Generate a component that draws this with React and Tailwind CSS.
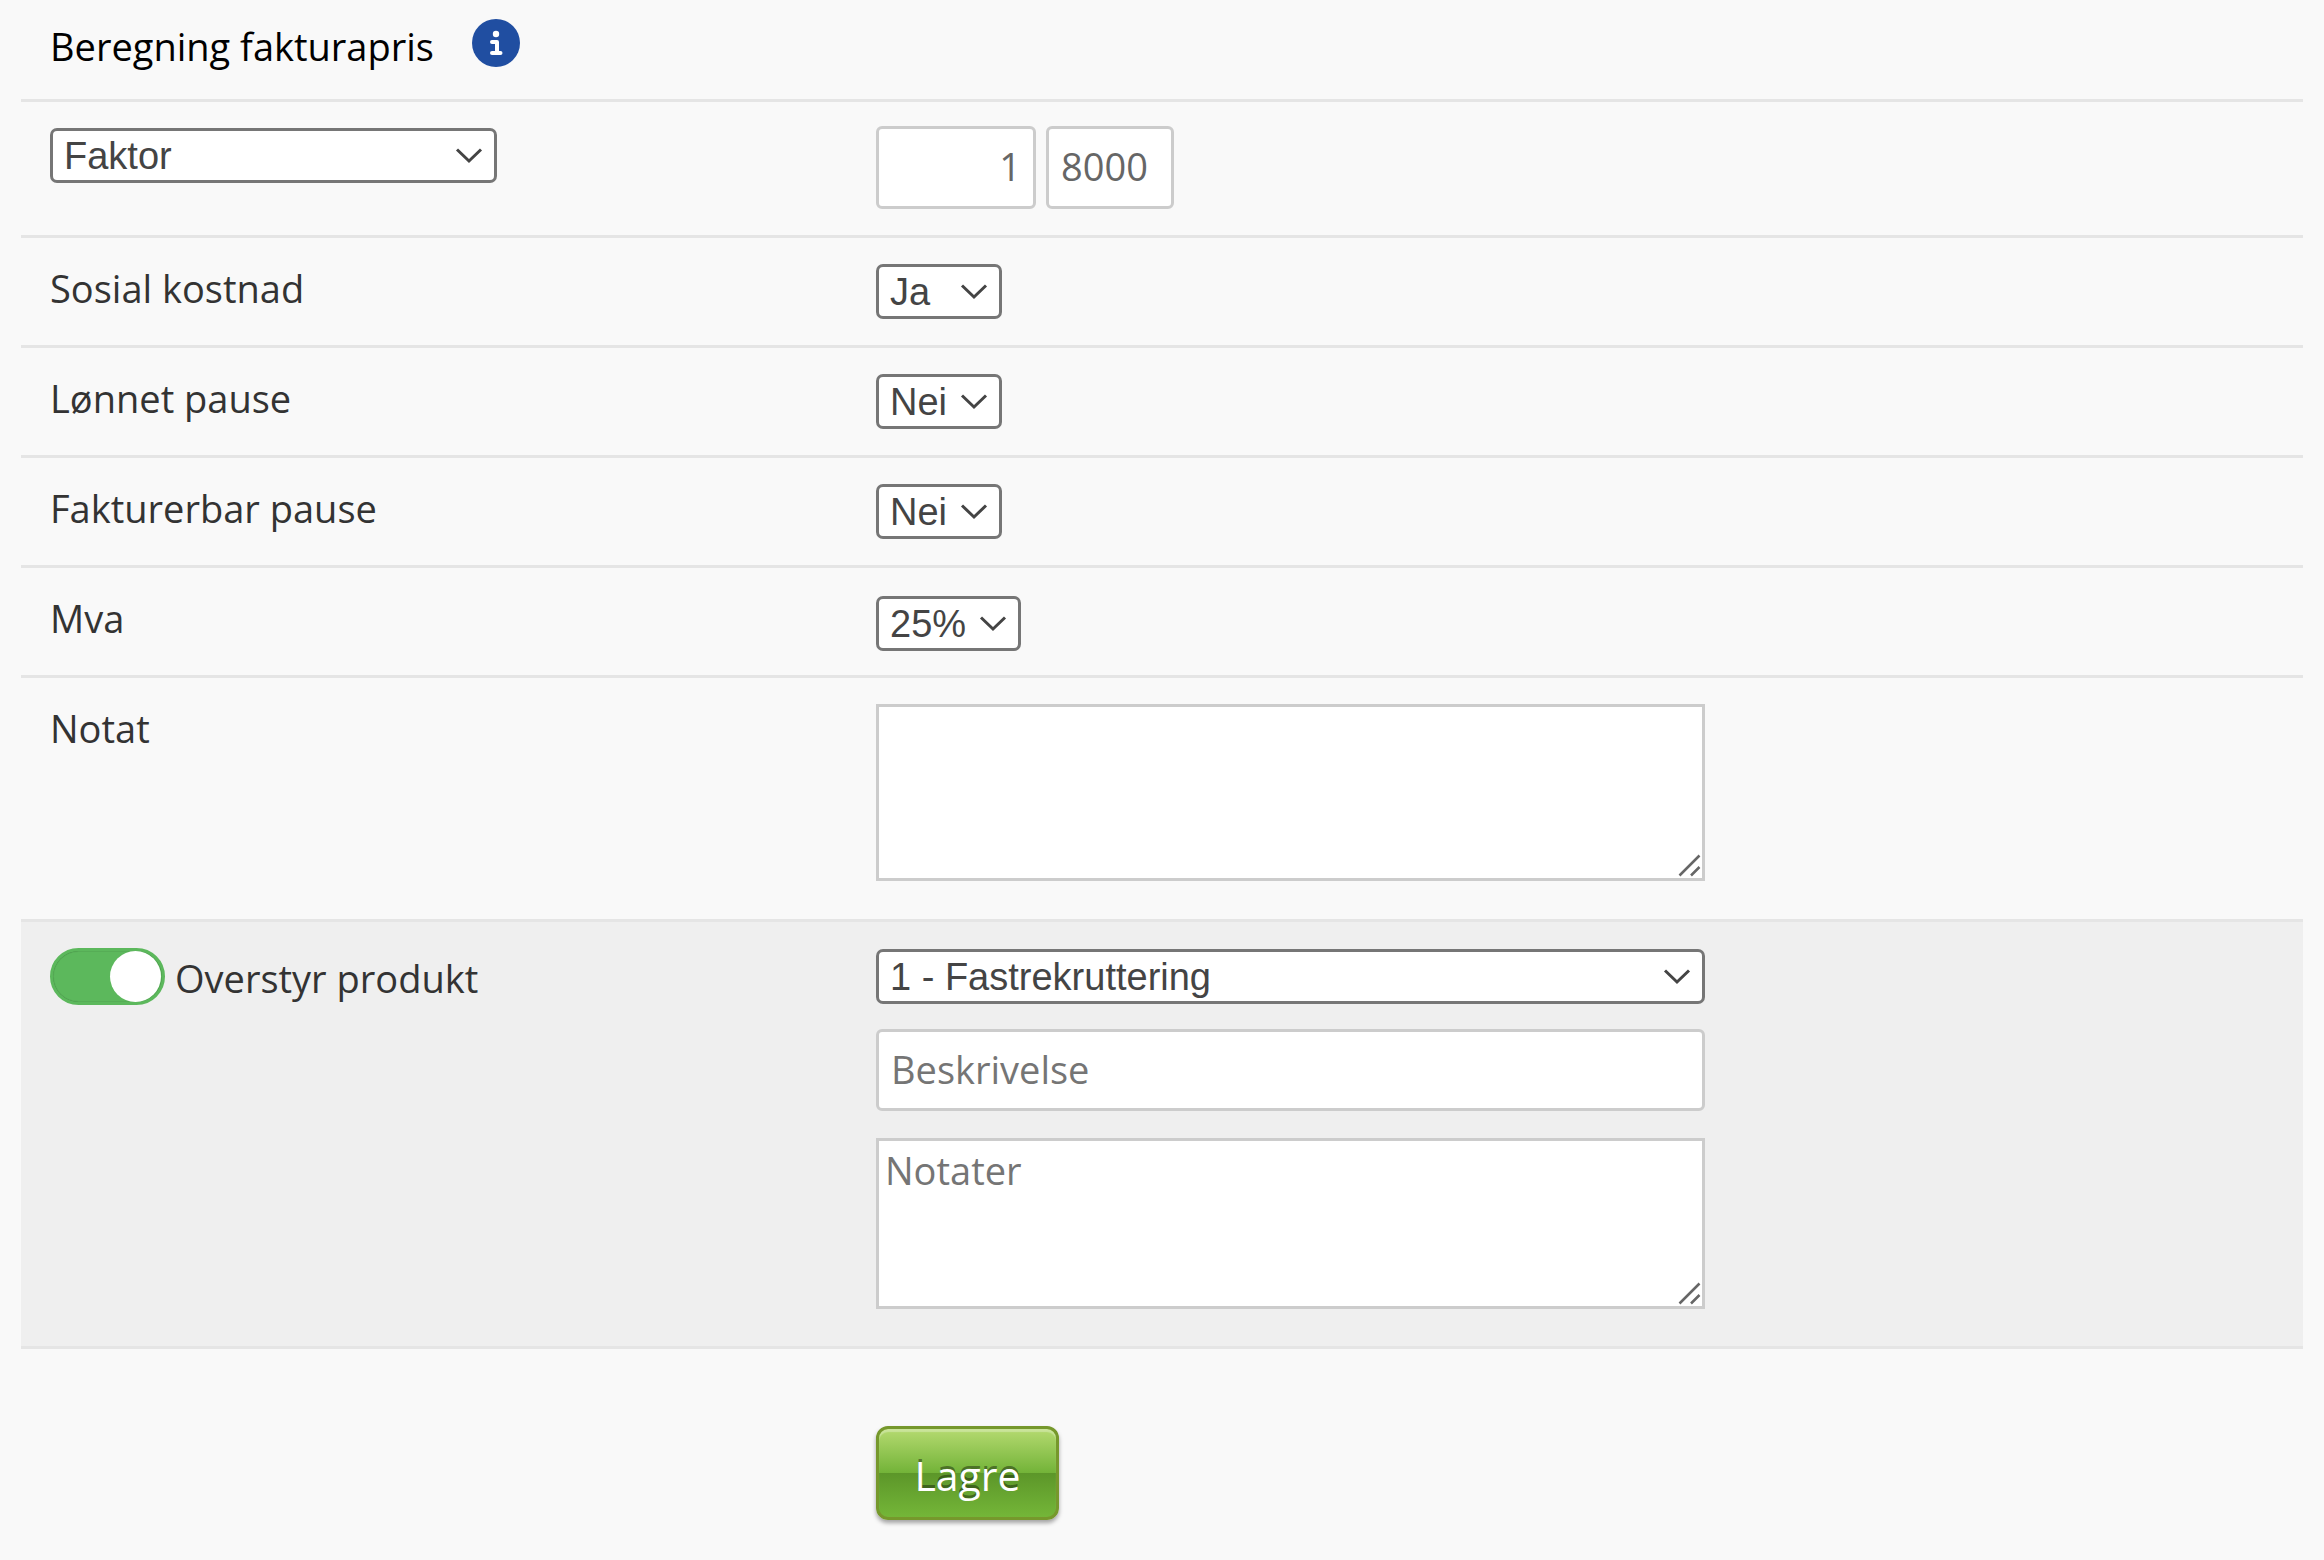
import { useState } from 'react'
import clsx from 'clsx'

// --- CONTROLES ---
const Select = ({ id, label, options, className }) => {
  const [value, setValue] = useState(options[0])

  return (
    <div className={clsx('relative h-[55px]', className)}>
      <select
        id={id}
        aria-label={label}
        value={value}
        onChange={(e) => setValue(e.target.value)}
        className="block h-full w-full appearance-none rounded-[7px] border-3 border-[#767676] bg-white pl-[11px] font-['Liberation_Sans',sans-serif] text-[38px] leading-[48px] text-[#444]"
      >
        {options.map((option) => (
          <option key={option}>{option}</option>
        ))}
      </select>
      <svg className="pointer-events-none absolute top-5 right-[14px] h-4 w-7" viewBox="0 0 28 16" fill="none" stroke="#444" strokeWidth="3">
        <path d="M2 1.5 L14 13 L26 1.5" />
      </svg>
    </div>
  )
}

const TextArea = ({ id, label, placeholder, className }) => (
  <div className={clsx('relative', className)}>
    <textarea
      id={id}
      aria-label={label}
      placeholder={placeholder}
      className="block h-full w-full resize-none border-3 border-[#ccc] bg-white px-[6px] py-[3px] text-[38px] leading-[52px] text-[#666] placeholder:text-[#757575]"
    />
    <svg className="pointer-events-none absolute right-[4px] bottom-[4px] h-6 w-6" viewBox="0 0 24 24" fill="none" stroke="#666" strokeWidth="2.5">
      <path d="M2.5 22.5 L22.5 2.5 M14 22.5 L22.5 14" />
    </svg>
  </div>
)

const Row = ({ children, className }) => (
  <div className={clsx('grid grid-cols-[826px_1fr] border-t-3 border-[#e5e5e5] pl-[29px]', className)}>{children}</div>
)

const inputClass =
  'block rounded-[6px] border-3 border-[#ccc] bg-white px-3 pb-[3px] text-[38px] text-[#666] placeholder:text-[#757575]'

function App() {
  const [overstyr, setOverstyr] = useState(true)

  return (
    <div className="min-h-screen bg-[#f9f9f9] px-[21px] font-['Open_Sans',sans-serif] text-[38px] leading-[52px] text-[#333]">
      <form onSubmit={(e) => e.preventDefault()}>
        <div className="flex h-[99px] items-start gap-[38px] pl-[29px]">
          <h1 className="pt-5 text-black">Beregning fakturapris</h1>
          <button type="button" aria-label="Info" className="mt-[19px]">
            <svg className="size-12" viewBox="0 0 48 48">
              <circle cx="24" cy="24" r="24" fill="#204ea1" />
              <circle cx="24" cy="15" r="3.2" fill="#fff" />
              <path d="M20 23 H25 V34 M20 34 H28.5" fill="none" stroke="#fff" strokeWidth="4" strokeLinecap="round" strokeLinejoin="round" />
            </svg>
          </button>
        </div>

        <Row className="h-[136px]">
          <Select id="beregning" label="Beregning" options={['Faktor', 'Fastpris']} className="mt-[26px] w-[447px]" />
          <div className="flex gap-[10px] pt-6">
            <input aria-label="Faktor" defaultValue="1" className={clsx(inputClass, 'h-[83px] w-[160px] text-right')} />
            <input aria-label="Desimaler" defaultValue="8000" className={clsx(inputClass, 'h-[83px] w-[128px]')} />
          </div>
        </Row>

        <Row className="h-[110px]">
          <label htmlFor="sosial" className="pt-6">Sosial kostnad</label>
          <Select id="sosial" options={['Ja', 'Nei']} className="mt-[26px] w-[126px]" />
        </Row>
        <Row className="h-[110px]">
          <label htmlFor="lonnet" className="pt-6">Lønnet pause</label>
          <Select id="lonnet" options={['Nei', 'Ja']} className="mt-[26px] w-[126px]" />
        </Row>
        <Row className="h-[110px]">
          <label htmlFor="fakturerbar" className="pt-6">Fakturerbar pause</label>
          <Select id="fakturerbar" options={['Nei', 'Ja']} className="mt-[26px] w-[126px]" />
        </Row>
        <Row className="h-[110px]">
          <label htmlFor="mva" className="pt-6">Mva</label>
          <Select id="mva" options={['25%', '15%', '0%']} className="mt-[28px] w-[145px]" />
        </Row>
        <Row className="pb-[38px]">
          <label htmlFor="notat" className="pt-6">Notat</label>
          <TextArea id="notat" className="mt-[26px] h-[177px] w-full max-w-[829px]" />
        </Row>

        <Row className="border-b-3 bg-[#efefef] pb-[37px]">
          <label className="flex items-start gap-[10px] pt-[26px]">
            <input type="checkbox" className="peer sr-only" checked={overstyr} onChange={(e) => setOverstyr(e.target.checked)} />
            <span
              className={clsx(
                'flex h-[57px] w-[115px] items-center rounded-full border-3 px-[1px]',
                overstyr
                  ? 'justify-end border-[#5cb85c] bg-[#5cb85c] shadow-[inset_0_0_1px_rgba(0,0,0,0.6)]'
                  : 'justify-start border-[#ccc] bg-[#ccc]'
              )}
            >
              <span className="size-[51px] rounded-full bg-white" />
            </span>
            <span className="pt-[4px]">Overstyr produkt</span>
          </label>
          <div className="flex max-w-[829px] flex-col pt-[27px]">
            <Select id="produkt" label="Produkt" options={['1 - Fastrekruttering', '2 - Vikar']} className="w-full" />
            <input aria-label="Beskrivelse" placeholder="Beskrivelse" className={clsx(inputClass, 'mt-[25px] h-[82px] w-full')} />
            <TextArea id="notater" label="Notater" placeholder="Notater" className="mt-[27px] h-[171px] w-full" />
          </div>
        </Row>

        <div className="pt-[77px] pl-[855px]">
          <button
            type="submit"
            className="h-[94px] w-[183px] rounded-[12px] border-3 border-[#76982c] bg-[linear-gradient(#b5da70_0%,#73b338_50%,#5c9629_50%,#74b638_100%)] pt-[3px] text-[41px] text-white shadow-[0_3px_4px_rgba(0,0,0,0.35),inset_0_3px_1px_rgba(255,255,255,0.3)] [text-shadow:0_-3px_0_rgba(0,0,0,0.4)]"
          >
            Lagre
          </button>
        </div>
      </form>
    </div>
  )
}

export default App
